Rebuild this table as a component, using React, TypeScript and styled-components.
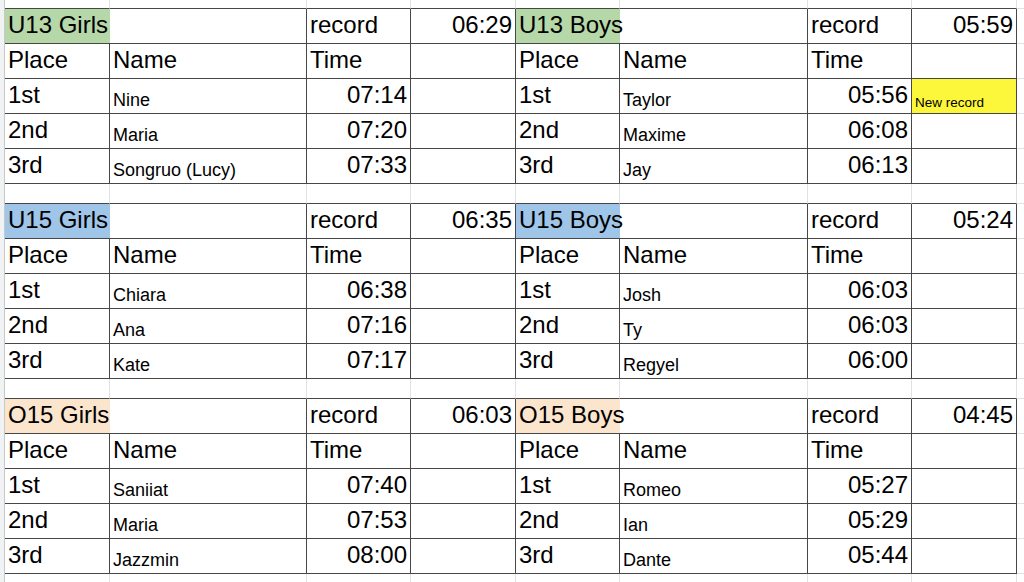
import React from "react";
import styled, { createGlobalStyle } from "styled-components";

const GlobalStyle = createGlobalStyle`
  body {
    margin: 0;
    background: #fff;
    color: #000;
    font-family: "Liberation Sans", Arial, sans-serif;
  }
`;

const LINE = "#474747";
const GRID = "#e1e2e3";
const COLS = "5px 105px 197px 104px 105px 104px 188px 104px 105px 1fr";

const GREEN = "#b6d7a8";
const BLUE = "#9fc5e8";
const PEACH = "#fce5cd";
const YELLOW = "#fdf73c";

type Size = "big" | "name" | "note";
const fontSize: Record<Size, number> = { big: 24, name: 18, note: 13.5 };
const padBottom: Record<Size, number> = { big: 6, name: 4.5, note: 4 };

const Sheet = styled.div`
  width: 1024px;
  height: 582px;
  overflow: hidden;
`;

const Row = styled.div<{ $h: number }>`
  display: grid;
  grid-template-columns: ${COLS};
  height: ${(p) => p.$h}px;
`;

const Gutter = styled.div`
  background: #f1f2f3;
  border-right: 1px solid #c6c8ca;
`;

const Blank = styled.div<{ $edge?: boolean }>`
  border-right: 1px solid ${GRID};
  border-bottom: 1px solid ${(p) => (p.$edge ? LINE : GRID)};
`;

const Tail = styled.div`
  border-bottom: 1px solid ${GRID};
`;

const Cell = styled.div<{ $fill?: string; $right?: boolean; $size?: Size; $open?: boolean }>`
  display: flex;
  align-items: flex-end;
  justify-content: ${(p) => (p.$right ? "flex-end" : "flex-start")};
  padding: 0 3px ${(p) => padBottom[p.$size ?? "big"]}px;
  background: ${(p) => p.$fill ?? "#fff"};
  border-right: ${(p) => (p.$open ? "none" : `1px solid ${LINE}`)};
  border-bottom: 1px solid ${LINE};
  font-size: ${(p) => fontSize[p.$size ?? "big"]}px;
  line-height: 1;
  white-space: nowrap;
  z-index: ${(p) => (p.$open ? 1 : 0)};
`;

type Result = { place: string; name: string; time: string; note?: string };
type Table = { title: string; fill: string; record: string; results: Result[] };

const blocks: [Table, Table][] = [
  [
    {
      title: "U13 Girls",
      fill: GREEN,
      record: "06:29",
      results: [
        { place: "1st", name: "Nine", time: "07:14" },
        { place: "2nd", name: "Maria", time: "07:20" },
        { place: "3rd", name: "Songruo (Lucy)", time: "07:33" },
      ],
    },
    {
      title: "U13 Boys",
      fill: GREEN,
      record: "05:59",
      results: [
        { place: "1st", name: "Taylor", time: "05:56", note: "New record" },
        { place: "2nd", name: "Maxime", time: "06:08" },
        { place: "3rd", name: "Jay", time: "06:13" },
      ],
    },
  ],
  [
    {
      title: "U15 Girls",
      fill: BLUE,
      record: "06:35",
      results: [
        { place: "1st", name: "Chiara", time: "06:38" },
        { place: "2nd", name: "Ana", time: "07:16" },
        { place: "3rd", name: "Kate", time: "07:17" },
      ],
    },
    {
      title: "U15 Boys",
      fill: BLUE,
      record: "05:24",
      results: [
        { place: "1st", name: "Josh", time: "06:03" },
        { place: "2nd", name: "Ty", time: "06:03" },
        { place: "3rd", name: "Regyel", time: "06:00" },
      ],
    },
  ],
  [
    {
      title: "O15 Girls",
      fill: PEACH,
      record: "06:03",
      results: [
        { place: "1st", name: "Saniiat", time: "07:40" },
        { place: "2nd", name: "Maria", time: "07:53" },
        { place: "3rd", name: "Jazzmin", time: "08:00" },
      ],
    },
    {
      title: "O15 Boys",
      fill: PEACH,
      record: "04:45",
      results: [
        { place: "1st", name: "Romeo", time: "05:27" },
        { place: "2nd", name: "Ian", time: "05:29" },
        { place: "3rd", name: "Dante", time: "05:44" },
      ],
    },
  ],
];

const GapRow = ({ h, edge }: { h: number; edge?: boolean }) => (
  <Row $h={h}>
    <Gutter />
    {Array.from({ length: 8 }, (_, i) => (
      <Blank key={i} $edge={edge} />
    ))}
    <Tail />
  </Row>
);

const HeaderCells = ({ t }: { t: Table }) => (
  <>
    <Cell $fill={t.fill} $open>
      {t.title}
    </Cell>
    <Cell />
    <Cell>record</Cell>
    <Cell $right>{t.record}</Cell>
  </>
);

const LabelCells = () => (
  <>
    <Cell>Place</Cell>
    <Cell>Name</Cell>
    <Cell>Time</Cell>
    <Cell />
  </>
);

const ResultCells = ({ r }: { r: Result }) => (
  <>
    <Cell>{r.place}</Cell>
    <Cell $size="name">{r.name}</Cell>
    <Cell $right>{r.time}</Cell>
    <Cell $size="note" $fill={r.note ? YELLOW : undefined}>
      {r.note}
    </Cell>
  </>
);

const Block = ({ pair }: { pair: [Table, Table] }) => {
  const [left, right] = pair;
  return (
    <>
      <Row $h={35}>
        <Gutter />
        <HeaderCells t={left} />
        <HeaderCells t={right} />
        <Tail />
      </Row>
      <Row $h={35}>
        <Gutter />
        <LabelCells />
        <LabelCells />
        <Tail />
      </Row>
      {left.results.map((r, i) => (
        <Row $h={35} key={r.place}>
          <Gutter />
          <ResultCells r={r} />
          <ResultCells r={right.results[i]} />
          <Tail />
        </Row>
      ))}
    </>
  );
};

export default function App() {
  return (
    <>
      <GlobalStyle />
      <Sheet>
        <GapRow h={9} edge />
        {blocks.map((pair, i) => (
          <React.Fragment key={pair[0].title}>
            {i > 0 && <GapRow h={20} edge />}
            <Block pair={pair} />
          </React.Fragment>
        ))}
        <GapRow h={20} />
      </Sheet>
    </>
  );
}
